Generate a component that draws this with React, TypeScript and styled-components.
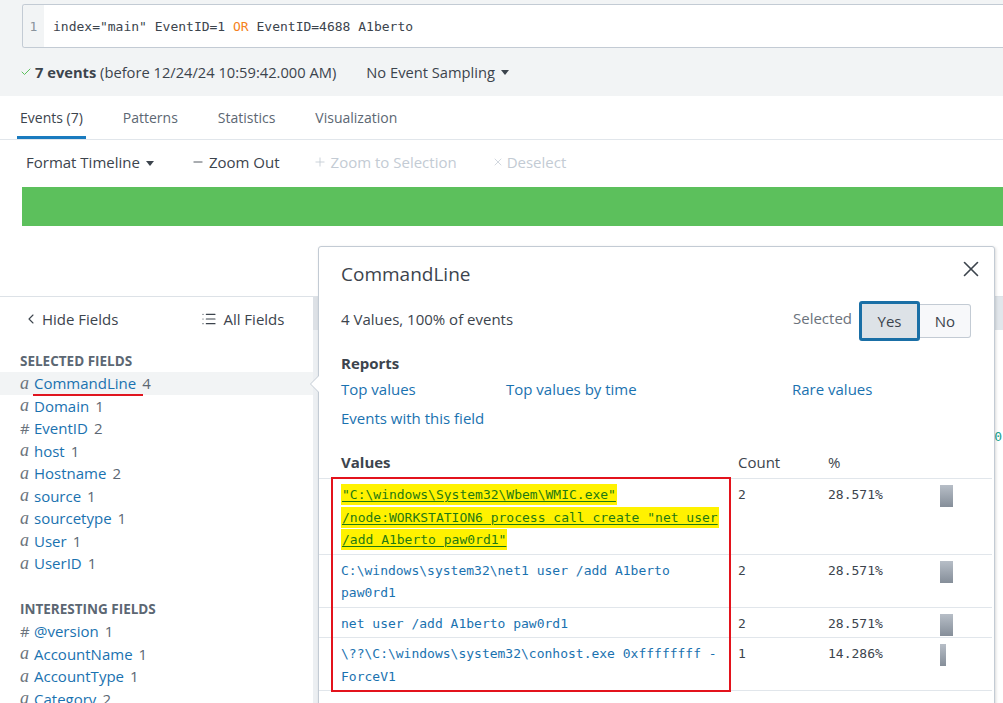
import React from "react";
import styled, { createGlobalStyle } from "styled-components";
import { Check, ChevronLeft, List, Minus, Plus, X } from "lucide-react";

const SANS = `"Open Sans", "Liberation Sans", Arial, sans-serif`;
const MONO = `"DejaVu Sans Mono", "Liberation Mono", monospace`;

const Global = createGlobalStyle`
  html, body { margin: 0; padding: 0; background: #fff; }
  body { font-family: ${SANS}; color: #3c444d; }
  * { box-sizing: border-box; }
`;

const Page = styled.div`
  position: relative;
  width: 1003px;
  height: 703px;
  overflow: hidden;
  background: #fff;
`;

/* ---------- search header ---------- */
const TopArea = styled.div`
  background: #f2f4f5;
  padding-top: 4px;
  height: 96px;
`;

const QueryBox = styled.div`
  display: flex;
  margin-left: 22px;
  height: 44px;
  width: 1000px;
  border: 1px solid #c3cbd4;
  border-right: none;
  border-radius: 3px 0 0 3px;
  background: #fff;
  overflow: hidden;
`;

const Gutter = styled.div`
  width: 21px;
  background: #f2f4f5;
  color: #8a939d;
  font-family: ${MONO};
  font-size: 13px;
  display: flex;
  align-items: center;
  justify-content: center;
`;

const QueryText = styled.div`
  display: flex;
  align-items: center;
  padding-left: 9px;
  font-family: ${MONO};
  font-size: 13px;
  color: #3c444d;
  white-space: pre;
`;

const Keyword = styled.span`
  color: #f58220;
`;

const StatusRow = styled.div`
  display: flex;
  align-items: center;
  height: 47px;
  padding-left: 20px;
  font-size: 14.7px;
  color: #3c444d;
`;

const StatusCount = styled.span`
  display: inline-flex;
  align-items: center;
  gap: 3px;
  b {
    font-weight: 700;
  }
`;

const Dropdown = styled.span`
  margin-left: 30px;
  display: inline-flex;
  align-items: center;
  gap: 4px;
  color: #3c444d;
`;

const Caret = styled.span`
  display: inline-block;
  width: 0;
  height: 0;
  border-left: 4px solid transparent;
  border-right: 4px solid transparent;
  border-top: 5px solid currentColor;
  margin-left: 2px;
  transform: translateY(1px);
`;

/* ---------- tabs ---------- */
const TabBar = styled.div`
  display: flex;
  gap: 34px;
  height: 44px;
  padding-left: 17px;
  border-bottom: 1px solid #e1e6eb;
`;

const Tab = styled.div<{ $active?: boolean }>`
  display: flex;
  align-items: center;
  padding: 2px 3px 0;
  font-size: 14px;
  color: ${(p) => (p.$active ? "#3c444d" : "#5c6773")};
  border-bottom: 3px solid ${(p) => (p.$active ? "#1a7bbf" : "transparent")};
`;

/* ---------- timeline ---------- */
const TimelineBar = styled.div`
  display: flex;
  align-items: center;
  height: 44px;
  padding-left: 26px;
  font-size: 15px;
`;

const ToolButton = styled.span<{ $disabled?: boolean; $gap?: number; $iconGap?: number }>`
  display: inline-flex;
  align-items: center;
  gap: ${(p) => p.$iconGap ?? 4}px;
  margin-right: ${(p) => p.$gap ?? 36}px;
  color: ${(p) => (p.$disabled ? "#c3cbd4" : "#3c444d")};
`;

const GreenBar = styled.div`
  margin: 3px 0 0 22px;
  height: 39px;
  background: #5cc05c;
`;

const Spacer = styled.div`
  height: 70px;
`;

/* ---------- main ---------- */
const Main = styled.div`
  display: flex;
  height: 407px;
`;

const FieldsPanel = styled.div`
  width: 313px;
  border-top: 1px solid #dde2e7;
  flex: none;
`;

const Scrollbar = styled.div`
  width: 5px;
  flex: none;
  background: #eceff2;
  border-top: 1px solid #dde2e7;
  display: flex;
  flex-direction: column;
`;

const ScrollThumb = styled.div`
  height: 33px;
  background: #dde1e6;
`;

const PanelActions = styled.div`
  display: flex;
  align-items: center;
  height: 43px;
  padding-left: 23px;
  font-size: 15px;
  color: #3c444d;
`;

const ActionLink = styled.span<{ $left?: number; $gap?: number }>`
  display: inline-flex;
  align-items: center;
  gap: ${(p) => p.$gap ?? 3}px;
  margin-left: ${(p) => p.$left ?? 0}px;
`;

const SectionTitle = styled.div<{ $top?: number }>`
  height: 22px;
  line-height: 22px;
  margin-top: ${(p) => p.$top ?? 0}px;
  padding-left: 20px;
  font-size: 13.5px;
  font-weight: 700;
  color: #5c6773;
  text-transform: uppercase;
`;

const FieldRow = styled.div<{ $active?: boolean }>`
  display: flex;
  align-items: center;
  height: 22.5px;
  padding-left: 20px;
  font-size: 15px;
  background: ${(p) => (p.$active ? "#f2f4f5" : "transparent")};
`;

const TypeIcon = styled.span<{ $num?: boolean }>`
  width: 14px;
  color: #6b737c;
  font-family: ${(p) => (p.$num ? SANS : `"Liberation Serif", "DejaVu Serif", serif`)};
  font-style: ${(p) => (p.$num ? "normal" : "italic")};
  font-size: ${(p) => (p.$num ? "15px" : "18px")};
`;

const FieldName = styled.span<{ $marked?: boolean }>`
  position: relative;
  color: #1a72b0;
  padding-right: 6px;
  &::after {
    content: "";
    display: ${(p) => (p.$marked ? "block" : "none")};
    position: absolute;
    left: -1px;
    right: -1px;
    bottom: -3px;
    height: 2px;
    background: #e0151f;
  }
`;

const FieldCount = styled.span`
  color: #5c6773;
`;

const EventsArea = styled.div`
  flex: 1;
  border-top: 1px solid #dde2e7;
`;

const EventsHeader = styled.div`
  height: 33px;
  background: #e1e6eb;
`;

const EventLine = styled.div<{ $top: number }>`
  margin-top: ${(p) => p.$top}px;
  text-align: right;
  font-family: ${MONO};
  font-size: 13px;
  color: #1aa38f;
  padding-right: 1px;
`;

/* ---------- popover ---------- */
const Popover = styled.div`
  position: absolute;
  left: 318px;
  top: 246px;
  width: 677px;
  height: 480px;
  background: #fff;
  border: 1px solid #c3cbd4;
  border-radius: 3px;
  box-shadow: 1px 1px 3px rgba(0, 0, 0, 0.15);
`;

const Arrow = styled.div`
  position: absolute;
  left: -9px;
  top: 128px;
  width: 0;
  height: 0;
  border-top: 9px solid transparent;
  border-bottom: 9px solid transparent;
  border-right: 9px solid #c3cbd4;
  &::after {
    content: "";
    position: absolute;
    left: 1px;
    top: -8px;
    border-top: 8px solid transparent;
    border-bottom: 8px solid transparent;
    border-right: 8px solid #fff;
  }
`;

const PopHeader = styled.div`
  display: flex;
  justify-content: space-between;
  align-items: flex-start;
  padding: 15px 10px 0 22px;
`;

const PopTitle = styled.div`
  font-size: 19px;
  line-height: 25px;
  color: #3c444d;
`;

const CloseButton = styled.span`
  display: flex;
  color: #3c444d;
  margin-top: -6px;
`;

const SummaryRow = styled.div`
  display: flex;
  align-items: center;
  justify-content: space-between;
  margin-top: 14px;
  height: 40px;
  padding: 0 23px 0 22px;
  font-size: 15px;
`;

const SummaryText = styled.span`
  transform: translateY(-2px);
`;

const SelectedGroup = styled.div`
  display: flex;
  align-items: center;
`;

const SelectedLabel = styled.span`
  color: #6b737c;
  margin-right: 7px;
  transform: translateY(-3px);
`;

const ToggleButton = styled.span<{ $on?: boolean }>`
  display: flex;
  align-items: center;
  justify-content: center;
  height: ${(p) => (p.$on ? 40 : 34)}px;
  width: ${(p) => (p.$on ? 61 : 51)}px;
  background: ${(p) => (p.$on ? "#dde2e7" : "#f7f8fa")};
  border: ${(p) => (p.$on ? "3px solid #1a6fa6" : "1px solid #c3cbd4")};
  border-left: ${(p) => (p.$on ? "3px solid #1a6fa6" : "none")};
  border-radius: ${(p) => (p.$on ? "3px" : "0 3px 3px 0")};
  color: #3c444d;
  font-size: 15px;
`;

const ReportsTitle = styled.div`
  margin-top: 11px;
  padding-left: 22px;
  font-size: 15px;
  font-weight: 700;
  line-height: 22px;
  color: #3c444d;
`;

const ReportLinks = styled.div`
  display: grid;
  grid-template-columns: 165px 286px 1fr;
  row-gap: 7px;
  margin-top: 4px;
  padding-left: 22px;
  font-size: 15px;
  line-height: 22px;
`;

const LinkText = styled.span`
  color: #1a72b0;
`;

const ValuesTable = styled.div`
  position: relative;
  margin-top: 17px;
  display: grid;
  grid-template-columns: 419px 90px 112px 1fr;
  margin-right: 2px;
`;

const HeadCell = styled.div<{ $bold?: boolean; $first?: boolean }>`
  height: 33px;
  display: flex;
  align-items: center;
  padding-left: ${(p) => (p.$first ? 22 : 0)}px;
  font-size: 15px;
  font-weight: ${(p) => (p.$bold ? 700 : 400)};
  color: #3c444d;
  border-bottom: 1px solid #e1e6eb;
`;

const Cell = styled.div<{ $first?: boolean }>`
  padding: 5px ${(p) => (p.$first ? "13px" : "0")} 2px ${(p) => (p.$first ? "22px" : "0")};
  font-family: ${MONO};
  font-size: 13px;
  line-height: 22.5px;
  color: ${(p) => (p.$first ? "#1a72b0" : "#3c444d")};
  border-bottom: 1px solid #e1e6eb;
`;

const Marked = styled.span`
  background: #fff200;
  color: #1f7a12;
  text-decoration: underline;
  text-underline-offset: 2px;
  padding: 3px 1px 3px;
  -webkit-box-decoration-break: clone;
  box-decoration-break: clone;
`;

const BarCell = styled.div`
  padding-top: 6px;
  border-bottom: 1px solid #e1e6eb;
`;

const Bar = styled.div`
  height: 22px;
  background: linear-gradient(#b7bec7, #858e99);
`;

const RedBox = styled.div`
  position: absolute;
  left: 12px;
  top: 31px;
  width: 400px;
  height: 215px;
  border: 2px solid #e3131c;
  pointer-events: none;
`;

const selectedFields: [string, string, number][] = [
  ["a", "CommandLine", 4],
  ["a", "Domain", 1],
  ["#", "EventID", 2],
  ["a", "host", 1],
  ["a", "Hostname", 2],
  ["a", "source", 1],
  ["a", "sourcetype", 1],
  ["a", "User", 1],
  ["a", "UserID", 1],
];

const interestingFields: [string, string, number][] = [
  ["#", "@version", 1],
  ["a", "AccountName", 1],
  ["a", "AccountType", 1],
  ["a", "Category", 2],
];

const values: { text: React.ReactNode; count: number; pct: string; frac: number }[] = [
  {
    text: (
      <Marked>
        "C:\windows\System32\Wbem\WMIC.exe" /node:WORKSTATION6 process call create "net user /add A1berto paw0rd1"
      </Marked>
    ),
    count: 2,
    pct: "28.571%",
    frac: 2 / 7,
  },
  { text: "C:\\windows\\system32\\net1 user /add A1berto paw0rd1", count: 2, pct: "28.571%", frac: 2 / 7 },
  { text: "net user /add A1berto paw0rd1", count: 2, pct: "28.571%", frac: 2 / 7 },
  { text: "\\??\\C:\\windows\\system32\\conhost.exe 0xffffffff -ForceV1", count: 1, pct: "14.286%", frac: 1 / 7 },
];

function FieldList({ items, activeName }: { items: [string, string, number][]; activeName?: string }) {
  return (
    <>
      {items.map(([t, name, n]) => (
        <FieldRow key={name} $active={name === activeName}>
          <TypeIcon $num={t === "#"}>{t}</TypeIcon>
          <FieldName $marked={name === activeName}>{name}</FieldName>
          <FieldCount>{n}</FieldCount>
        </FieldRow>
      ))}
    </>
  );
}

export default function App() {
  return (
    <Page>
      <Global />
      <TopArea>
        <QueryBox>
          <Gutter>1</Gutter>
          <QueryText>
            index="main" EventID=1 <Keyword>OR</Keyword> EventID=4688 A1berto
          </QueryText>
        </QueryBox>
        <StatusRow>
          <StatusCount>
            <Check size={12} color="#5cc05c" strokeWidth={2} />
            <span>
              <b>7 events</b> (before 12/24/24 10:59:42.000 AM)
            </span>
          </StatusCount>
          <Dropdown>
            No Event Sampling
            <Caret />
          </Dropdown>
        </StatusRow>
      </TopArea>

      <TabBar>
        <Tab $active>Events (7)</Tab>
        <Tab>Patterns</Tab>
        <Tab>Statistics</Tab>
        <Tab>Visualization</Tab>
      </TabBar>

      <TimelineBar>
        <ToolButton $gap={37}>
          Format Timeline
          <Caret />
        </ToolButton>
        <ToolButton $gap={33}>
          <Minus size={14} strokeWidth={1.5} />
          Zoom Out
        </ToolButton>
        <ToolButton $disabled $gap={35}>
          <Plus size={14} strokeWidth={1.5} />
          Zoom to Selection
        </ToolButton>
        <ToolButton $disabled $iconGap={3}>
          <X size={12} strokeWidth={1.5} />
          Deselect
        </ToolButton>
      </TimelineBar>

      <GreenBar />
      <Spacer />

      <Main>
        <FieldsPanel>
          <PanelActions>
            <ActionLink>
              <ChevronLeft size={16} strokeWidth={1.6} />
              Hide Fields
            </ActionLink>
            <ActionLink $left={83} $gap={6}>
              <List size={16} strokeWidth={1.8} />
              All Fields
            </ActionLink>
          </PanelActions>
          <SectionTitle $top={10}>Selected Fields</SectionTitle>
          <FieldList items={selectedFields} activeName="CommandLine" />
          <SectionTitle $top={23.5}>Interesting Fields</SectionTitle>
          <FieldList items={interestingFields} />
        </FieldsPanel>
        <Scrollbar>
          <ScrollThumb />
        </Scrollbar>
        <EventsArea>
          <EventsHeader />
          <EventLine $top={99}>0</EventLine>
        </EventsArea>
      </Main>

      <Popover>
        <Arrow />
        <PopHeader>
          <PopTitle>CommandLine</PopTitle>
          <CloseButton>
            <X size={26} strokeWidth={1.5} />
          </CloseButton>
        </PopHeader>
        <SummaryRow>
          <SummaryText>4 Values, 100% of events</SummaryText>
          <SelectedGroup>
            <SelectedLabel>Selected</SelectedLabel>
            <ToggleButton $on>Yes</ToggleButton>
            <ToggleButton>No</ToggleButton>
          </SelectedGroup>
        </SummaryRow>
        <ReportsTitle>Reports</ReportsTitle>
        <ReportLinks>
          <LinkText>Top values</LinkText>
          <LinkText>Top values by time</LinkText>
          <LinkText>Rare values</LinkText>
          <LinkText>Events with this field</LinkText>
        </ReportLinks>
        <ValuesTable>
          <HeadCell $bold $first>
            Values
          </HeadCell>
          <HeadCell>Count</HeadCell>
          <HeadCell>%</HeadCell>
          <HeadCell />
          {values.map((v, i) => (
            <React.Fragment key={i}>
              <Cell $first>{v.text}</Cell>
              <Cell>{v.count}</Cell>
              <Cell>{v.pct}</Cell>
              <BarCell>
                <Bar style={{ width: `${Math.round(v.frac * 44)}px` }} />
              </BarCell>
            </React.Fragment>
          ))}
          <RedBox />
        </ValuesTable>
      </Popover>
    </Page>
  );
}
